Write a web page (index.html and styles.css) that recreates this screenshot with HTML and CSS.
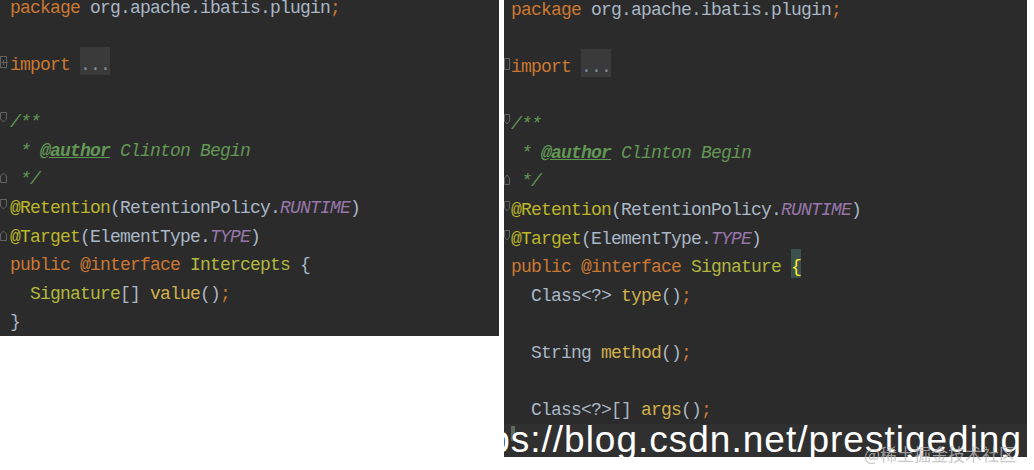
FILE: index.html
```html
<!DOCTYPE html>
<html lang="en">

<head>
    <meta charset="UTF-8">
    <title>Signature</title>
    <link rel="stylesheet" href="styles.css">
</head>

<body>
    <div class="page">

        <!-- Intercepts.java -->
        <div class="editor editor-left">
            <div class="code">
                <div class="line"><span class="gutter"></span><span class="txt"><span class="kw">package</span> org.apache.ibatis.plugin<span class="kw">;</span></span></div>
                <div class="line"><span class="gutter"></span><span class="txt"></span></div>
                <div class="line"><span class="gutter"><svg viewBox="0 0 10 28"><rect x="0.5" y="8.5" width="6" height="11"/><path d="M1.5 14.5H8M3.5 12V17"/></svg></span><span class="txt"><span class="kw">import</span> <span class="folded">...</span></span></div>
                <div class="line"><span class="gutter"></span><span class="txt"></span></div>
                <div class="line"><span class="gutter"><svg viewBox="0 0 10 28"><path d="M0.5 7.5H6.5V14L3.5 17L0.5 14Z"/></svg></span><span class="txt"><span class="cm">/**</span></span></div>
                <div class="line"><span class="gutter"></span><span class="txt"><span class="cm"> * <span class="tag">@author</span> Clinton Begin</span></span></div>
                <div class="line"><span class="gutter"><svg viewBox="0 0 10 28"><path d="M0.5 20.5H6.5V14L3.5 11L0.5 14Z"/></svg></span><span class="txt"><span class="cm"> */</span></span></div>
                <div class="line"><span class="gutter"><svg viewBox="0 0 10 28"><path d="M0.5 8.5H6.5V15L3.5 18L0.5 15Z"/></svg></span><span class="txt"><span class="an">@Retention</span>(RetentionPolicy.<span class="cst">RUNTIME</span>)</span></div>
                <div class="line"><span class="gutter"><svg viewBox="0 0 10 28"><path d="M0.5 20.5H6.5V14L3.5 11L0.5 14Z"/></svg></span><span class="txt"><span class="an">@Target</span>(ElementType.<span class="cst">TYPE</span>)</span></div>
                <div class="line"><span class="gutter"></span><span class="txt"><span class="kw">public @interface</span> <span class="ty">Intercepts</span> {</span></div>
                <div class="line"><span class="gutter"></span><span class="txt">  <span class="ty">Signature</span>[] <span class="fn">value</span>()<span class="kw">;</span></span></div>
                <div class="line"><span class="gutter"></span><span class="txt">}</span></div>
            </div>
        </div>

        <!-- Signature.java -->
        <div class="editor editor-right">
            <div class="code">
                <div class="line"><span class="gutter"></span><span class="txt"><span class="kw">package</span> org.apache.ibatis.plugin<span class="kw">;</span></span></div>
                <div class="line"><span class="gutter"></span><span class="txt"></span></div>
                <div class="line"><span class="gutter"><svg viewBox="0 0 7 28"><rect x="0.5" y="8.5" width="5" height="11"/></svg></span><span class="txt"><span class="kw">import</span> <span class="folded">...</span></span></div>
                <div class="line"><span class="gutter"></span><span class="txt"></span></div>
                <div class="line"><span class="gutter"><svg viewBox="0 0 7 28"><path d="M0.5 7.5H5.5V14L3 17L0.5 14Z"/></svg></span><span class="txt"><span class="cm">/**</span></span></div>
                <div class="line"><span class="gutter"></span><span class="txt"><span class="cm"> * <span class="tag">@author</span> Clinton Begin</span></span></div>
                <div class="line"><span class="gutter"><svg viewBox="0 0 7 28"><path d="M0.5 20.5H5.5V14L3 11L0.5 14Z"/></svg></span><span class="txt"><span class="cm"> */</span></span></div>
                <div class="line"><span class="gutter"><svg viewBox="0 0 7 28"><path d="M0.5 8.5H5.5V15L3 18L0.5 15Z"/></svg></span><span class="txt"><span class="an">@Retention</span>(RetentionPolicy.<span class="cst">RUNTIME</span>)</span></div>
                <div class="line"><span class="gutter"><svg viewBox="0 0 7 28"><path d="M0.5 8.5H5.5V15L3 18L0.5 15Z"/></svg></span><span class="txt"><span class="an">@Target</span>(ElementType.<span class="cst">TYPE</span>)</span></div>
                <div class="line"><span class="gutter"></span><span class="txt"><span class="kw">public @interface</span> <span class="ty">Signature</span> <span class="brace">{</span></span></div>
                <div class="line"><span class="gutter"></span><span class="txt">  Class&lt;?&gt; <span class="fn">type</span>()<span class="kw">;</span></span></div>
                <div class="line"><span class="gutter"></span><span class="txt"></span></div>
                <div class="line"><span class="gutter"></span><span class="txt">  String <span class="fn">method</span>()<span class="kw">;</span></span></div>
                <div class="line"><span class="gutter"></span><span class="txt"></span></div>
                <div class="line"><span class="gutter"></span><span class="txt">  Class&lt;?&gt;[] <span class="fn">args</span>()<span class="kw">;</span></span></div>
            </div>
            <div class="band"><span class="caret-mark"></span></div>
        </div>

        <!-- marca d'agua -->
        <div class="watermark">https://blog.csdn.net/prestigeding</div>
        <div class="watermark-small">@稀土掘金技术社区</div>
    </div>
</body>

</html>
```

FILE: styles.css
```css
* {
    box-sizing: border-box;
}

body {
    margin: 0;
    background-color: #fff;
    font-family: "Liberation Mono", "DejaVu Sans Mono", monospace;
}

.page {
    position: relative;
    display: flex;
    align-items: flex-start;
    gap: 5px;
    width: 1034px;
    height: 470px;
    overflow: hidden;
}

.editor {
    background-color: #2b2b2b;
    color: #a9b7c6;
    overflow: hidden;
    display: flex;
    flex-direction: column;
}

.editor-left {
    width: 499px;
    height: 336px;
}

.editor-left .code {
    margin-top: -9.2px;
}

.editor-left .gutter {
    width: 10px;
}

.editor-right {
    width: 523px;
    height: 457px;
}

.editor-right .code {
    margin-top: -7.2px;
}

.editor-right .gutter {
    width: 7px;
}

.line {
    display: flex;
    height: 28.6px;
}

.gutter {
    flex-shrink: 0;
    height: 100%;
}

.gutter svg {
    display: block;
    width: 100%;
    height: 28px;
    fill: none;
    stroke: #626262;
    stroke-width: 1;
}

.txt {
    white-space: pre;
    font-size: 18px;
    letter-spacing: -0.8px;
    padding-top: 6px;
    line-height: 22.6px;
}

.kw {
    color: #cc7832;
}

.cm {
    color: #629755;
    font-style: italic;
}

.tag {
    font-weight: bold;
    text-decoration: underline;
}

.an {
    color: #bbb529;
}

.cst {
    color: #9876aa;
    font-style: italic;
}

.ty {
    color: #b2b83e;
}

.fn {
    color: #d2b04c;
}

.folded {
    background-color: #3a3a3a;
    color: #7f8c96;
    padding: 7.8px 0 0.4px;
}

.brace {
    background-color: #3b514d;
    color: #ffef28;
    padding: 7.8px 0 0.4px;
}

.band {
    margin-top: 2px;
    height: 34px;
    background-color: #303030;
    padding-top: 2px;
    padding-left: 7px;
}

.caret-mark {
    display: block;
    width: 4px;
    height: 15px;
    background-color: #5a6a5c;
}

.watermark {
    position: absolute;
    left: 445px;
    top: 421px;
    font-family: "Liberation Sans", Arial, sans-serif;
    font-size: 37px;
    line-height: 37px;
    letter-spacing: 1px;
    color: #fff;
    white-space: nowrap;
}

.watermark-small {
    position: absolute;
    left: 864px;
    top: 444px;
    font-family: "Noto Sans CJK SC", sans-serif;
    font-size: 17px;
    line-height: 20px;
    color: rgba(185, 185, 185, 0.8);
    white-space: nowrap;
}
```
